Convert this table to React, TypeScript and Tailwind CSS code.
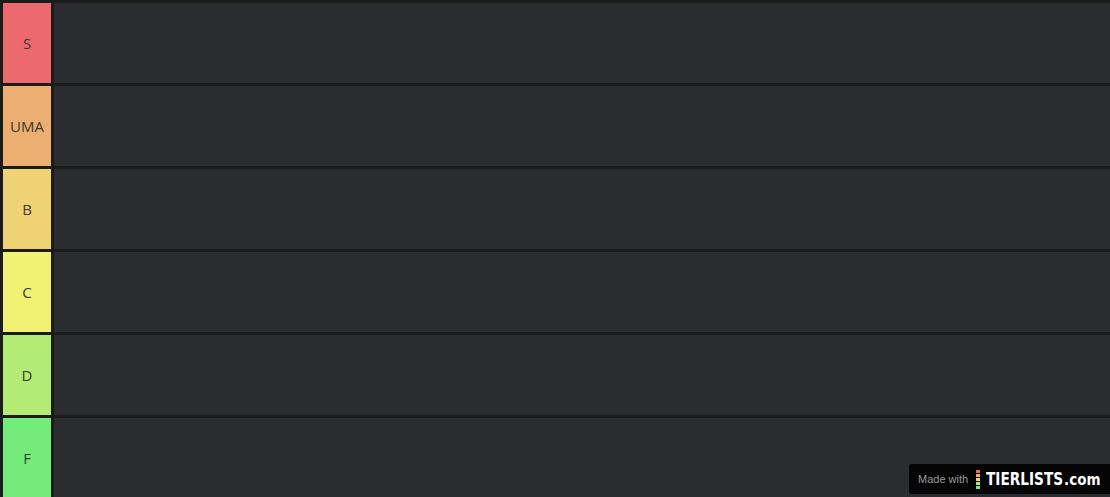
const tiers = [
  { label: 'S', color: 'bg-[#ec6a6d]' },
  { label: 'UMA', color: 'bg-[#edae72]' },
  { label: 'B', color: 'bg-[#efd274]' },
  { label: 'C', color: 'bg-[#f1f174]' },
  { label: 'D', color: 'bg-[#b2ec74]' },
  { label: 'F', color: 'bg-[#74ec7b]' },
]

const LogoMark = () => (
  <div className="flex flex-col gap-[1px] mr-[6px] shrink-0">
    <span className="block w-[4px] h-[3px] bg-[#ec6a6d]" />
    <span className="block w-[4px] h-[3px] bg-[#edae72]" />
    <span className="block w-[4px] h-[3px] bg-[#efd274]" />
    <span className="block w-[4px] h-[3px] bg-[#b2ec74]" />
    <span className="block w-[4px] h-[3px] bg-[#74ec7b]" />
  </div>
)

export default function App() {
  return (
    <div
      className="relative w-[1110px] h-[497px] overflow-hidden bg-[#1b1b1b] pt-[3px] pl-[3px]"
      style={{ fontFamily: '"Open Sans", "Noto Sans", sans-serif' }}
    >
      <div className="flex flex-col gap-[3px]">
        {tiers.map((t) => (
          <div key={t.label} className="flex h-[80px] gap-[3px]">
            <div
              className={`${t.color} w-[48px] shrink-0 flex items-center justify-center text-[15px] text-[#3a3a2e]`}
            >
              {t.label}
            </div>
            <div className="flex-1 bg-[#2b2c2f]" />
          </div>
        ))}
      </div>

      <div className="absolute left-[909px] top-[464px] w-[201px] h-[30px] bg-[#050505] rounded-l-[3px] flex items-center pl-[9px] whitespace-nowrap">
        <span
          className="text-[11px] text-[#9a9a9a] mr-[8px] shrink-0"
          style={{ fontFamily: '"Liberation Sans", Arial, sans-serif' }}
        >
          Made with
        </span>
        <LogoMark />
        <div
          className="flex items-baseline font-bold text-white leading-none shrink-0"
          style={{ fontFamily: '"DejaVu Sans", sans-serif' }}
        >
          <span className="inline-block w-[78px] text-[18px]">
            <span className="inline-block origin-left scale-x-[0.76]">TIERLISTS</span>
          </span>
          <span className="inline-block w-[37px] text-[15px]">
            <span className="inline-block origin-left scale-x-[0.9]">.com</span>
          </span>
        </div>
      </div>
    </div>
  )
}
